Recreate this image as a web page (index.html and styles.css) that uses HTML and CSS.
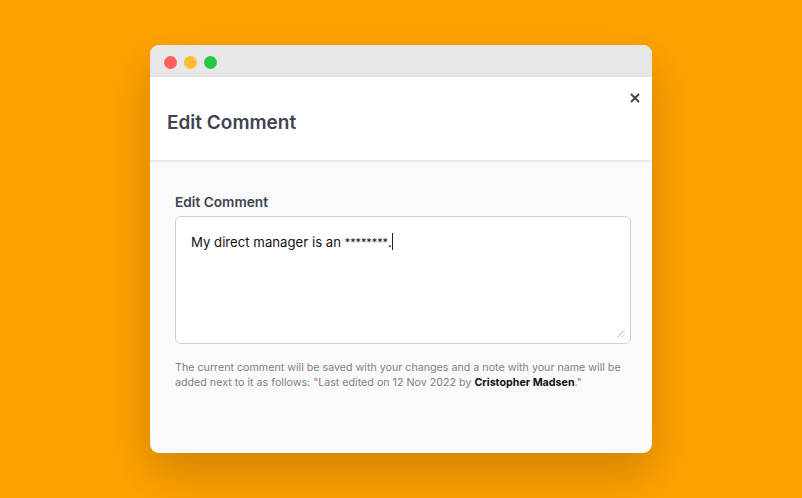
FILE: index.html
```html
<!DOCTYPE html>
<html lang="en">
<head>
<meta charset="utf-8">
<title>Edit Comment</title>
<link rel="stylesheet" href="styles.css">
</head>
<body>
<div class="window">
  <div class="titlebar">
    <span class="dot dot-red"></span>
    <span class="dot dot-yellow"></span>
    <span class="dot dot-green"></span>
  </div>
  <header class="header">
    <h1 class="title">Edit Comment</h1>
    <svg class="close" width="10" height="10" viewBox="0 0 10 10" aria-label="Close"><path d="M1 1l8 8M9 1l-8 8" stroke="#3f4450" stroke-width="1.9" fill="none"/></svg>
  </header>
  <main class="body">
    <div class="label">Edit Comment</div>
    <div class="input">
      <span class="value">My direct manager is an <span class="mask">********</span>.</span><span class="caret"></span>
      <svg class="grip" width="8" height="8" viewBox="0 0 8 8"><path d="M0.5 7.5L7.5 0.5M4.5 7.5L7.5 4.5" stroke="#c0c0c0" stroke-width="1" fill="none"/></svg>
    </div>
    <p class="note">The current comment will be saved with your changes and a note with your name will be added next to it as follows: "Last edited on 12 Nov 2022 by <strong class="name">Cristopher Madsen</strong>."</p>
  </main>
</div>
</body>
</html>
```

FILE: styles.css
```css
* { box-sizing: border-box; }
html, body { margin: 0; height: 100%; }
body {
  background: #ffa200;
  font-family: "Inter", "Noto Sans", sans-serif;
  padding: 45px 150px;
  overflow: hidden;
}
.window {
  width: 502px;
  height: 408px;
  border-radius: 9px;
  overflow: hidden;
  background: #fafafa;
  display: flex;
  flex-direction: column;
  box-shadow: 0 20px 45px rgba(90, 50, 0, 0.28);
}
.titlebar {
  height: 32px;
  background: #e7e7e7;
  display: flex;
  align-items: center;
  gap: 7px;
  padding: 2px 0 0 14px;
  flex: none;
}
.dot { width: 13px; height: 13px; border-radius: 50%; }
.dot-red { background: #ff5f5f; }
.dot-yellow { background: #febc2e; }
.dot-green { background: #28c840; }
.header {
  height: 83px;
  background: #fff;
  flex: none;
  position: relative;
  padding: 34px 17px 0;
  box-shadow: 0 1px 3px rgba(0, 0, 0, 0.12);
}
.title {
  margin: 0;
  font-size: 19px;
  line-height: 24px;
  font-weight: 600;
  color: #3f4450;
}
.close { position: absolute; top: 16px; right: 12px; }
.body { flex: 1; padding: 33px 21px 0 25px; }
.label {
  font-size: 13.7px;
  line-height: 18px;
  font-weight: 600;
  color: #3f4450;
  margin-bottom: 5px;
}
.input {
  height: 128px;
  background: #fff;
  border: 1px solid #cfcfcf;
  border-radius: 6px;
  padding: 16px 15px;
  font-size: 13.2px;
  line-height: 18px;
  color: #111;
  position: relative;
}
.mask { font-size: 10.8px; vertical-align: 1px; }
.caret {
  display: inline-block;
  width: 1px;
  height: 17px;
  background: #222;
  vertical-align: -3px;
}
.grip { position: absolute; right: 5px; bottom: 5px; }
.note {
  margin: 16px 0 0;
  font-size: 10.7px;
  line-height: 15px;
  color: #808084;
}
.name { font-weight: 700; color: #111; }
```
